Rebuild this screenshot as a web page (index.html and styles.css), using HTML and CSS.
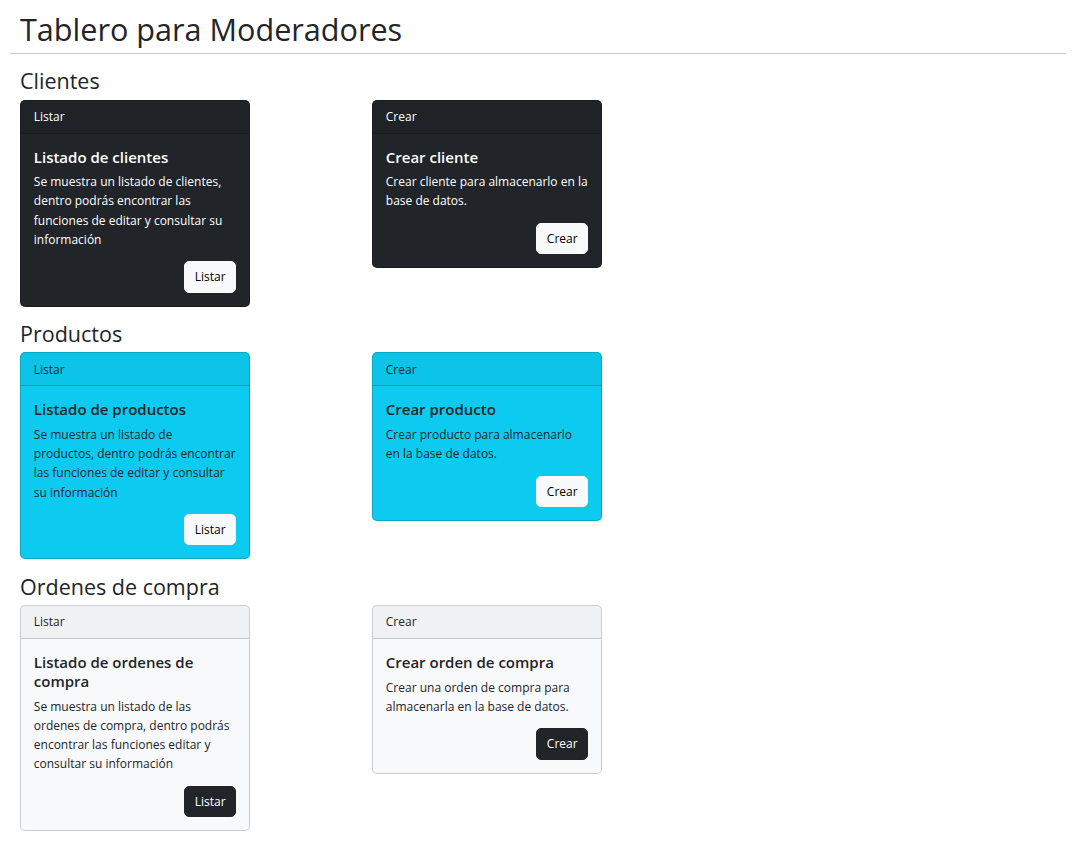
FILE: index.html
```html
<!DOCTYPE html>
<html lang="es">
<head>
<meta charset="utf-8">
<title>Tablero para Moderadores</title>
<link rel="stylesheet" href="styles.css">
</head>
<body>
<div class="page">
  <header class="page-head">
    <h1 class="page-title">Tablero para Moderadores</h1>
  </header>

  <section class="group">
    <h3 class="group-title">Clientes</h3>
    <div class="cards">
      <div class="card card-dark">
        <div class="card-header">Listar</div>
        <div class="card-body">
          <h5 class="card-title">Listado de clientes</h5>
          <p class="card-text">Se muestra un listado de clientes,<br>dentro podrás encontrar las<br>funciones de editar y consultar su<br>información</p>
          <div class="card-actions"><button class="btn btn-light">Listar</button></div>
        </div>
      </div>
      <div class="card card-dark">
        <div class="card-header">Crear</div>
        <div class="card-body">
          <h5 class="card-title">Crear cliente</h5>
          <p class="card-text">Crear cliente para almacenarlo en la<br>base de datos.</p>
          <div class="card-actions"><button class="btn btn-light">Crear</button></div>
        </div>
      </div>
    </div>
  </section>

  <section class="group">
    <h3 class="group-title">Productos</h3>
    <div class="cards">
      <div class="card card-info">
        <div class="card-header">Listar</div>
        <div class="card-body">
          <h5 class="card-title">Listado de productos</h5>
          <p class="card-text">Se muestra un listado de<br>productos, dentro podrás encontrar<br>las funciones de editar y consultar<br>su información</p>
          <div class="card-actions"><button class="btn btn-light">Listar</button></div>
        </div>
      </div>
      <div class="card card-info">
        <div class="card-header">Crear</div>
        <div class="card-body">
          <h5 class="card-title">Crear producto</h5>
          <p class="card-text">Crear producto para almacenarlo<br>en la base de datos.</p>
          <div class="card-actions"><button class="btn btn-light">Crear</button></div>
        </div>
      </div>
    </div>
  </section>

  <section class="group">
    <h3 class="group-title">Ordenes de compra</h3>
    <div class="cards">
      <div class="card card-light">
        <div class="card-header">Listar</div>
        <div class="card-body">
          <h5 class="card-title">Listado de ordenes de<br>compra</h5>
          <p class="card-text">Se muestra un listado de las<br>ordenes de compra, dentro podrás<br>encontrar las funciones editar y<br>consultar su información</p>
          <div class="card-actions"><button class="btn btn-dark">Listar</button></div>
        </div>
      </div>
      <div class="card card-light">
        <div class="card-header">Crear</div>
        <div class="card-body">
          <h5 class="card-title">Crear orden de compra</h5>
          <p class="card-text">Crear una orden de compra para<br>almacenarla en la base de datos.</p>
          <div class="card-actions"><button class="btn btn-dark">Crear</button></div>
        </div>
      </div>
    </div>
  </section>
</div>
</body>
</html>
```

FILE: styles.css
```css
* { box-sizing: border-box; }

html, body {
  margin: 0;
  padding: 0;
  background: #ffffff;
}

body {
  font-family: "Open Sans", "Noto Sans", "Liberation Sans", sans-serif;
  font-size: 12px;
  line-height: 19.2px;
  color: #212529;
}

.page {
  margin: 0 26px 0 10px;
  padding-top: 10px;
}

.page-head {
  border-bottom: 1px solid #c8c9ca;
  padding: 0 10px;
}

.page-title {
  margin: 0 0 5px;
  font-size: 30.6px;
  line-height: 38.4px;
  font-weight: 500;
}

.group {
  padding: 0 10px;
  margin-top: 14px;
}

.group + .group {
  margin-top: 14.5px;
}

.group-title {
  margin: 0 0 4.4px;
  font-size: 21.5px;
  line-height: 26.9px;
  font-weight: 500;
}

.cards {
  display: grid;
  grid-template-columns: 352px 352px;
  align-items: start;
}

.card {
  width: 230px;
  border: 1px solid rgba(0, 0, 0, 0.175);
  border-radius: 5px;
  overflow: hidden;
}

.card-header {
  padding: 6.4px 12.8px;
  background: rgba(0, 0, 0, 0.03);
  border-bottom: 1px solid rgba(0, 0, 0, 0.175);
}

.card-body {
  padding: 14px 12.8px 13px;
}

.card-title {
  margin: 0 0 5.4px;
  font-size: 15px;
  line-height: 19.2px;
  font-weight: 600;
  white-space: nowrap;
}

.card-text {
  margin: 0 0 12.3px;
  white-space: nowrap;
}

.card-actions {
  display: flex;
  justify-content: flex-end;
}

.btn {
  font-family: inherit;
  font-size: 12px;
  line-height: 19.2px;
  padding: 5px 9.6px;
  border-radius: 5px;
  border: 1px solid transparent;
  cursor: pointer;
}

.btn-light {
  background: #f8f9fa;
  border-color: #f8f9fa;
  color: #000000;
}

.btn-dark {
  background: #212529;
  border-color: #212529;
  color: #ffffff;
}

.card-dark {
  background: #212529;
  color: #ffffff;
}

.card-info {
  background: #0dcaf0;
  color: #212529;
}

.card-light {
  background: #f8f9fa;
  color: #212529;
}
```
